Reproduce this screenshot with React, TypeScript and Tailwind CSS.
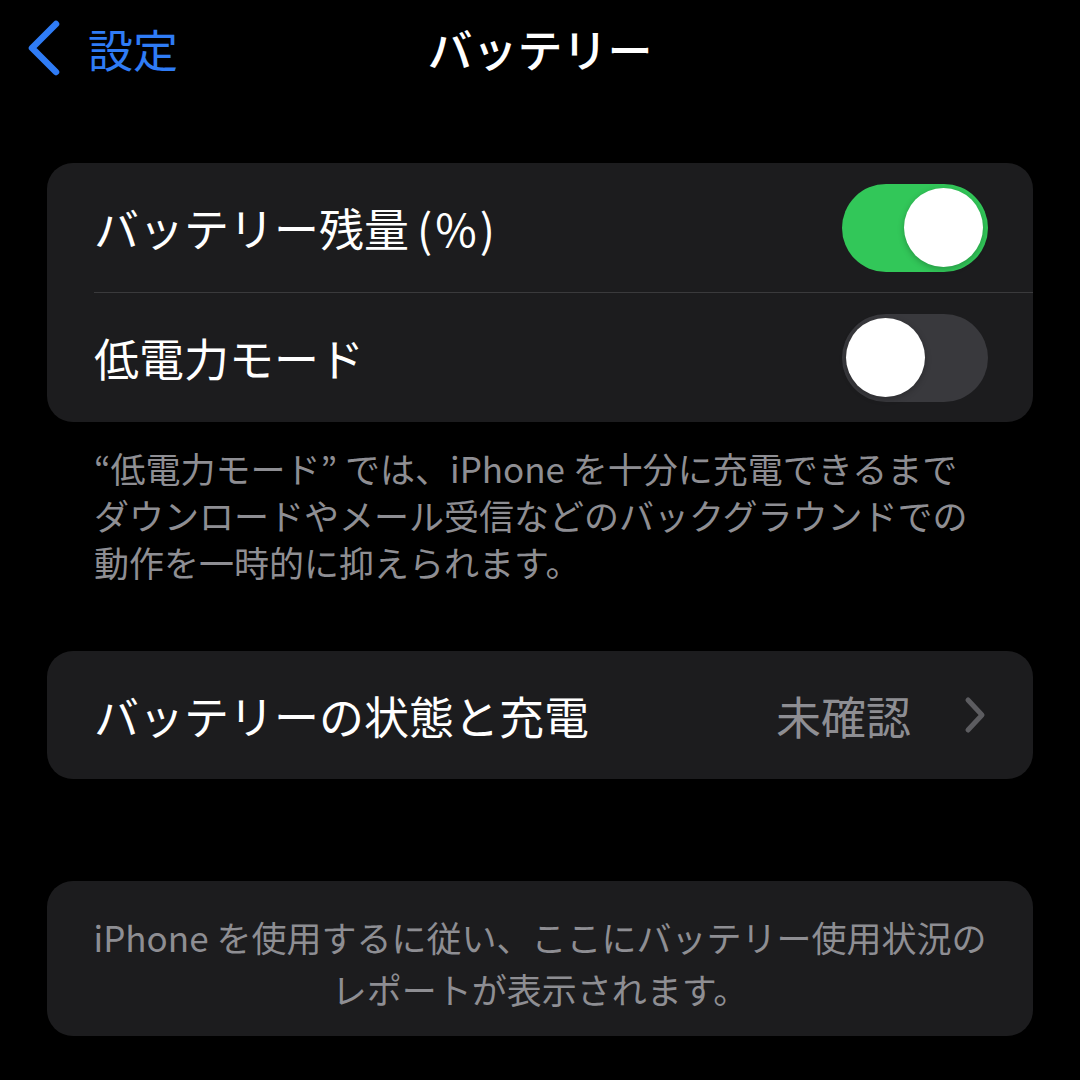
import React from "react";

function Toggle({ on }: { on: boolean }) {
  return (
    <div
      className={
        on
          ? "flex h-[88px] w-[146px] items-center justify-end rounded-full bg-[#32c759] px-[5px]"
          : "flex h-[88px] w-[146px] items-center justify-start rounded-full bg-[#39393d] px-[4px]"
      }
    >
      <div className="h-[79px] w-[79px] rounded-full bg-white shadow-[0_2px_6px_rgba(0,0,0,0.25)]" />
    </div>
  );
}

export default function App() {
  return (
    <div
      className="h-[1080px] w-[1080px] overflow-hidden bg-black text-white"
      style={{ fontFamily: '"Noto Sans CJK JP", "Noto Sans", sans-serif' }}
    >
      {/* Nav bar */}
      <div className="grid h-[96px] grid-cols-[1fr_auto_1fr] items-center">
        <div className="flex items-center pl-[25px]">
          <svg width="36" height="58" viewBox="0 0 36 58" fill="none">
            <path
              d="M31 5 L7 29 L31 53"
              stroke="#2f7cf6"
              strokeWidth="6.5"
              strokeLinecap="round"
              strokeLinejoin="round"
            />
          </svg>
          <span className="ml-[27px] text-[45px] leading-none text-[#2f7cf6]">設定</span>
        </div>
        <div className="text-[45px] font-medium leading-none">バッテリー</div>
        <div />
      </div>

      {/* Card 1 */}
      <div className="mx-[47px] mt-[67px] overflow-hidden rounded-[26px] bg-[#1c1c1e]">
        <div className="flex h-[129px] items-center justify-between pl-[47px] pr-[45px]">
          <span className="text-[45px] leading-none">
            バッテリー残量<span className="ml-[8px] tracking-[3px]">(%)</span>
          </span>
          <Toggle on={true} />
        </div>
        <div className="ml-[47px] h-[1px] bg-[#3a3a3c]" />
        <div className="flex h-[129px] items-center justify-between pl-[47px] pr-[45px]">
          <span className="text-[45px] leading-none">低電力モード</span>
          <Toggle on={false} />
        </div>
      </div>

      {/* Footer note */}
      <div className="mx-[47px] mt-[22px] px-[47px] text-[35px] leading-[47px] text-[#8e8e93]">
        <p>“低電力モード” では、iPhone を十分に充電できるまで</p>
        <p>ダウンロードやメール受信などのバックグラウンドでの</p>
        <p>動作を一時的に抑えられます。</p>
      </div>

      {/* Card 2 */}
      <div className="mx-[47px] mt-[66px] flex h-[128px] items-center rounded-[26px] bg-[#1c1c1e] pl-[47px] pr-[46px]">
        <span className="text-[45px] leading-none">バッテリーの状態と充電</span>
        <span className="ml-auto text-[45px] leading-none text-[#8e8e93]">未確認</span>
        <svg className="ml-[52px]" width="24" height="38" viewBox="0 0 24 38" fill="none">
          <path
            d="M5 4 L19 19 L5 34"
            stroke="#5c5c60"
            strokeWidth="5"
            strokeLinecap="round"
            strokeLinejoin="round"
          />
        </svg>
      </div>

      {/* Card 3 */}
      <div className="mx-[47px] mt-[102px] rounded-[26px] bg-[#1c1c1e] px-[40px] pb-[21px] pt-[30px] text-center text-[35px] leading-[52px] text-[#8e8e93]">
        <p>iPhone を使用するに従い、ここにバッテリー使用状況の</p>
        <p>レポートが表示されます。</p>
      </div>
    </div>
  );
}
